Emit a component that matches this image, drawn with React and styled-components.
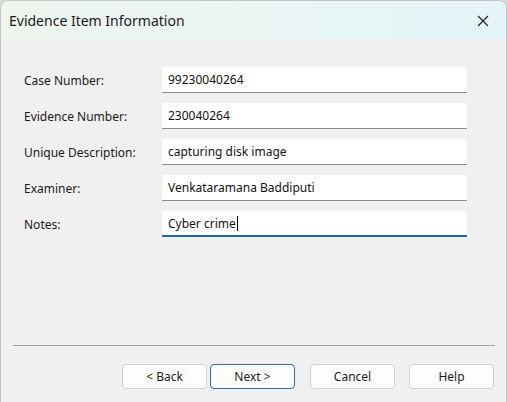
import React from "react";
import styled, { createGlobalStyle } from "styled-components";

const Global = createGlobalStyle`
  html, body { margin: 0; padding: 0; background: #dcdcdc; }
  body { font-family: "Segoe UI", "Noto Sans", "Open Sans", sans-serif; }
  #root { width: 507px; height: 402px; overflow: hidden; }
`;

const Window = styled.div`
  width: 507px;
  height: 402px;
  box-sizing: border-box;
  display: flex;
  flex-direction: column;
  background: #f0f0f0;
  border: 1px solid #c4c4c4;
  border-bottom: none;
  border-radius: 8px 8px 0 0;
  overflow: hidden;
`;

const TitleBar = styled.div`
  height: 39px;
  flex: none;
  display: flex;
  align-items: center;
  justify-content: space-between;
  padding: 0 0 0 8px;
  background: linear-gradient(90deg, #eef4ee 0%, #e9f5f3 50%, #e5f4f8 100%);
`;

const Title = styled.div`
  font-family: "Noto Sans", sans-serif;
  font-size: 14px;
  color: #1a1a1a;
`;

const CloseButton = styled.div`
  width: 46px;
  height: 39px;
  display: flex;
  align-items: center;
  justify-content: center;
`;

const Body = styled.div`
  flex: 1;
  display: flex;
  flex-direction: column;
  padding: 27px 12px 0 23px;
`;

const Form = styled.div`
  display: grid;
  grid-template-columns: 138px 305px;
  row-gap: 10px;
  align-items: center;
`;

const Label = styled.div`
  font-family: "Noto Sans", sans-serif;
  font-size: 12px;
  color: #1a1a1a;
`;

const Field = styled.div`
  height: 26px;
  box-sizing: border-box;
  background: #ffffff;
  border-bottom: ${(p) => (p.$focused ? "2px solid #1d64a4" : "1px solid #8c8c8c")};
  border-radius: 2px 2px 0 0;
  display: flex;
  align-items: center;
  padding: ${(p) => (p.$focused ? "1px 0 0 6px" : "0 0 0 6px")};
  font-family: "Noto Sans", sans-serif;
  font-size: 12px;
  color: #111;
`;

const Caret = styled.span`
  display: inline-block;
  width: 1px;
  height: 15px;
  background: #000;
  margin-left: 1px;
`;

const Spacer = styled.div`
  flex: 1;
`;

const Separator = styled.div`
  height: 1px;
  margin: 0 0 0 -11px;
  width: 482px;
  background: #a0a0a0;
`;

const ButtonRow = styled.div`
  display: flex;
  justify-content: flex-end;
  padding: 18px 0 13px 0;
`;

const Button = styled.div`
  width: 85px;
  height: 25px;
  box-sizing: border-box;
  margin-left: ${(p) => p.$gap}px;
  border: 1px solid ${(p) => (p.$default ? "#2f6fae" : "#d0d0d0")};
  border-radius: 4px;
  background: #fdfdfd;
  display: flex;
  align-items: center;
  justify-content: center;
  font-family: "Noto Sans", sans-serif;
  font-size: 12px;
  color: #1a1a1a;
`;

const rows = [
  ["Case Number:", "99230040264"],
  ["Evidence Number:", "230040264"],
  ["Unique Description:", "capturing disk image"],
  ["Examiner:", "Venkataramana Baddiputi"],
  ["Notes:", "Cyber crime", true],
];

export default function App() {
  return (
    <>
      <Global />
      <Window>
        <TitleBar>
          <Title>Evidence Item Information</Title>
          <CloseButton>
            <svg width="12" height="12" viewBox="0 0 12 12">
              <path d="M1 1 L11 11 M11 1 L1 11" stroke="#1a1a1a" strokeWidth="1.1" />
            </svg>
          </CloseButton>
        </TitleBar>
        <Body>
          <Form>
            {rows.map(([label, value, focused]) => (
              <React.Fragment key={label}>
                <Label>{label}</Label>
                <Field $focused={focused}>
                  {value}
                  {focused && <Caret />}
                </Field>
              </React.Fragment>
            ))}
          </Form>
          <Spacer />
          <Separator />
          <ButtonRow>
            <Button $gap={0}>&lt; Back</Button>
            <Button $gap={3} $default>Next &gt;</Button>
            <Button $gap={15}>Cancel</Button>
            <Button $gap={14}>Help</Button>
          </ButtonRow>
        </Body>
      </Window>
    </>
  );
}
